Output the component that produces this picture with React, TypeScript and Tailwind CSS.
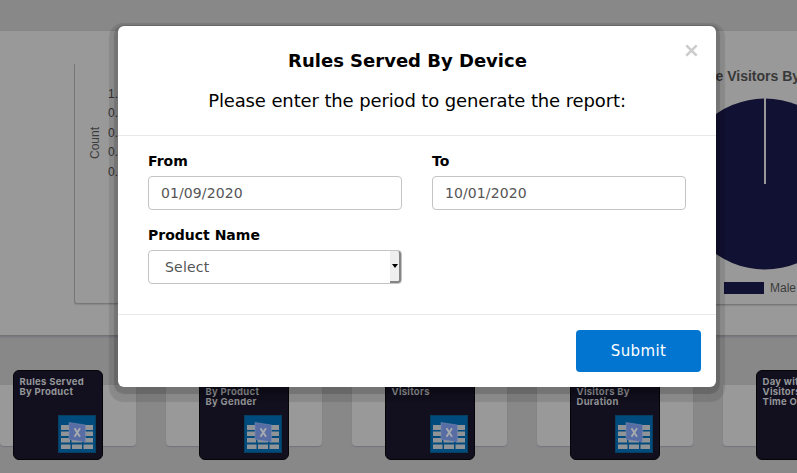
import React from "react";
import { ReactNode } from "react";

function SheetIcon() {
  return (
    <svg viewBox="0 0 38 38" className="absolute right-[6px] bottom-[6px] h-[38px] w-[38px]">
      <rect x="0.5" y="0.5" width="37" height="37" fill="#004b7e" stroke="#073f60" />
      <g fill="#919496">
        <path d="M3 10h9v5H3zM26 10h9v5h-9zM3 16.5h9V21H3zM26 16.5h9V21h-9zM3 23h9v4.500H3zM13.500 23H24v4.500H13.500zM26 23h9v4.500h-9zM3 29.500h9.500V34H3zM14 29.500h10V34H14zM25.500 29.500H35V34h-9.500z" />
      </g>
      <path d="M11 7.500l16.500 2.500V27L11 24.500z" fill="#586da3" stroke="#7f8db0" strokeWidth=".5" />
      <path d="M16.500 13.300l5.500 8.400M22 13.300L16.500 21.700" fill="none" stroke="#a7aaae" strokeWidth="1.900" />
    </svg>
  );
}

const tiles = [
  { lines: ["Rules Served", "By Product"], card: "w-[136px]", pad: "pl-[13px]" },
  { lines: ["Rules Served", "By Product", "By Gender"], card: "w-[156px]", pad: "pl-[33px]" },
  { lines: ["Returning", "Visitors"], card: "w-[155px]", pad: "pl-[33px]" },
  { lines: ["Returning", "Visitors By", "Duration"], card: "w-[156px]", pad: "pl-[33px]" },
  { lines: ["Day with Most", "Visitors By", "Time Of Day"], card: "w-[156px]", pad: "pl-[33px]" },
];

function Dashboard() {
  return (
    <div className="flex h-full flex-col bg-[#888] pt-[31px] font-['Liberation_Sans',sans-serif]">
      <section className="flex h-[305px] shrink-0 border-b border-[#737373] bg-[#999] pt-[33px] pl-[74px] shadow-[0_1px_2px_#73737b]">
        <div className="flex h-[240px] w-[300px] shrink-0 rounded-bl-[3px] border-b border-l border-[#777] pl-3 shadow-[0_1px_1px_#888]">
          <div className="flex h-[158px] w-4 items-center justify-center">
            <span className="-rotate-90 text-[12px] text-[#3c3c3c]">Count</span>
          </div>
          <div className="flex flex-col pt-[21px] pl-[5px] text-[12px] leading-[19.4px] text-[#333]">
            <span>1.0</span>
            <span>0.8</span>
            <span>0.6</span>
            <span>0.4</span>
            <span>0.2</span>
          </div>
        </div>
        <div className="ml-[266px] h-[241px] w-[157px] shrink-0 overflow-hidden border-b border-[#777] shadow-[0_1px_1px_#888]">
          <h2 className="ml-[75.5px] pt-[4px] text-[14px] leading-[16px] font-bold whitespace-nowrap text-[#383838]">e Visitors By</h2>
          <svg viewBox="0 0 172 172" className="mt-[13.5px] ml-[39px] h-[172px] w-[172px] max-w-none">
            <circle cx="86" cy="86" r="85.500" fill="#111133" />
            <path d="M86 0v86" stroke="#999" strokeWidth="2" />
          </svg>
          <div className="mt-[11.5px] ml-[84px] flex items-center gap-[6px]">
            <span className="h-3 w-10 shrink-0 bg-[#111133]" />
            <span className="text-[12px] leading-[14px] text-[#3c3c3c]">Male</span>
          </div>
        </div>
      </section>
      <section className="flex w-[900px] gap-[30px] pt-[49px]">
        {tiles.map((tile, i) => (
          <div key={i} className={`h-[61px] shrink-0 rounded-b-[4px] bg-[#999] shadow-[0_1px_1px_#747480] ${tile.card} ${tile.pad}`}>
            <div className="relative -mt-[15px] h-[90px] w-[90px] rounded-[6px] border border-[#050508] bg-[#12101f] px-[5.5px] pt-[5.5px] font-['Inter','Open_Sans',sans-serif] text-[9.500px] leading-[10px] font-bold tracking-[0.030em] whitespace-nowrap text-[#949698]">
              {tile.lines.map((line) => <div key={line}>{line}</div>)}
              <SheetIcon />
            </div>
          </div>
        ))}
      </section>
    </div>
  );
}

function Field({ label, children }: { label: string; children: ReactNode }) {
  return (
    <label className="flex w-[254px] flex-col">
      <span className="mb-[6px] text-[14px] leading-[18px] font-bold text-black">{label}</span>
      <span className="flex h-[34px] items-center rounded-[4px] border border-[#c4c4c4] bg-white text-[14px] tracking-[0.100px] text-[#555]">{children}</span>
    </label>
  );
}

export default function App() {
  return (
    <main className="relative h-[473px] w-[797px] overflow-hidden">
      <Dashboard />
      <div role="dialog" className="absolute top-[26px] left-[118px] flex h-[361px] w-[598px] flex-col rounded-[6px] bg-white font-['DejaVu_Sans',sans-serif] shadow-[0_3px_1px_4px_rgba(0,0,0,.15),0_6px_1px_9px_rgba(0,0,0,.10)]">
        <header className="relative flex h-[110px] shrink-0 flex-col items-center border-b border-[#e8e8e8] pt-[24px] text-black">
          <h1 className="pr-[19px] text-[18px] leading-[22px] font-bold">Rules Served By Device</h1>
          <p className="mt-[18px] text-[18px] leading-[22px] tracking-[-0.125px]">Please enter the period to generate the report:</p>
          <button aria-label="Close" className="absolute top-[18px] right-[18px] h-[13px] w-[13px]">
            <svg viewBox="0 0 13 13" className="h-[13px] w-[13px]">
              <path d="M1.300 1.300l10.400 10.400M11.700 1.300L1.300 11.700" stroke="#ccc" strokeWidth="2.600" />
            </svg>
          </button>
        </header>
        <div className="grid h-[178px] shrink-0 grid-cols-[254px_254px] content-start gap-x-[30px] gap-y-4 px-[30px] pt-4">
          <Field label="From"><span className="pl-3">01/09/2020</span></Field>
          <Field label="To"><span className="pl-3">10/01/2020</span></Field>
          <Field label="Product Name">
            <span className="flex-1 pl-4 tracking-[0.200px]">Select</span>
            <span className="flex h-8 w-[11px] items-center justify-center rounded-r-[3px] border-r-2 border-b-2 border-[#858585] bg-[#eee]">
              <span className="h-0 w-0 border-x-[3.500px] border-t-4 border-x-transparent border-t-black" />
            </span>
          </Field>
        </div>
        <footer className="flex flex-1 justify-end border-t border-[#e8e8e8] pt-[15px] pr-[15px]">
          <button className="h-[42px] w-[125px] rounded-[4px] bg-[#0275d0] text-[15px] tracking-[0.350px] text-white">Submit</button>
        </footer>
      </div>
    </main>
  );
}
